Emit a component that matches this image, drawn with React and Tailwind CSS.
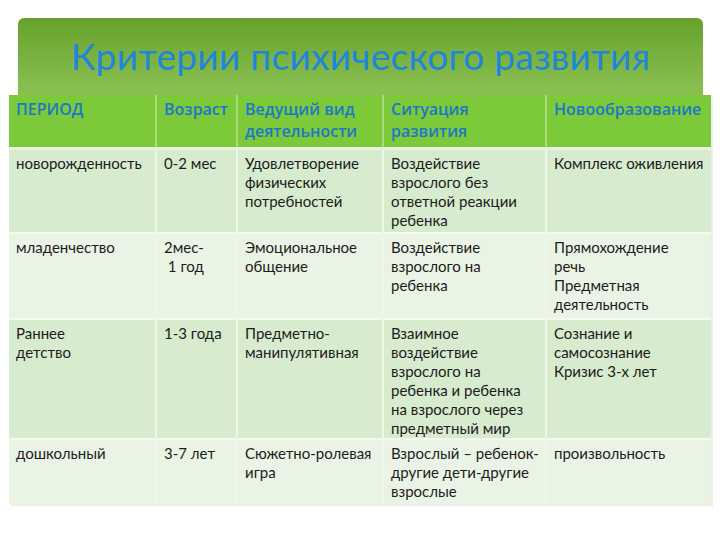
import React from "react";

const cols = [
  { label: ["ПЕРИОД"], w: "w-[147px]" },
  { label: ["Возраст"], w: "w-[81px]" },
  { label: ["Ведущий вид", "деятельности"], w: "w-[146px]" },
  { label: ["Ситуация", "развития"], w: "w-[163px]" },
  { label: ["Новообразование"], w: "w-[165px]" },
];

const rows = [
  {
    h: "h-[85px]",
    bg: "bg-[#d7ebce]",
    cells: [
      ["новорожденность"],
      ["0-2 мес"],
      ["Удовлетворение", "физических", "потребностей"],
      ["Воздействие", "взрослого без", "ответной реакции", "ребенка"],
      ["Комплекс оживления"],
    ],
  },
  {
    h: "h-[86px]",
    bg: "bg-[#eaf4e5]",
    cells: [
      ["младенчество"],
      ["2мес-", "\u00a01 год"],
      ["Эмоциональное", "общение"],
      ["Воздействие", "взрослого на", "ребенка"],
      ["Прямохождение", "речь", "Предметная", "деятельность"],
    ],
  },
  {
    h: "h-[120px]",
    bg: "bg-[#d7ebce]",
    cells: [
      ["Раннее", "детство"],
      ["1-3 года"],
      ["Предметно-", "манипулятивная"],
      ["Взаимное", "воздействие", "взрослого на", "ребенка и ребенка", "на взрослого через", "предметный мир"],
      ["Сознание и", "самосознание", "Кризис 3-х лет"],
    ],
  },
  {
    h: "h-[65px]",
    bg: "bg-[#eaf4e5]",
    cells: [
      ["дошкольный"],
      ["3-7 лет"],
      ["Сюжетно-ролевая", "игра"],
      ["Взрослый – ребенок-", "другие дети-другие", "взрослые"],
      ["произвольность"],
    ],
  },
];

export default function App() {
  return (
    <div
      className="w-[720px] h-[540px] bg-white relative overflow-hidden"
      style={{ fontFamily: "Lato, 'Open Sans', sans-serif" }}
    >
      <div className="pt-[18px] pl-[18px] pr-[17px]">
        <div className="h-[77px] rounded-t-md bg-gradient-to-b from-[#66a22b] to-[#8cc152] flex items-center justify-center">
          <h1 className="text-[37px] leading-none font-normal text-[#1f86da] tracking-[0.3px] -mt-[3px]">
            Критерии психического развития
          </h1>
        </div>
      </div>

      <div className="pl-[9px]">
        <table className="table-fixed border-collapse w-[702px] shadow-[2px_2px_0_#eceeea]">
          <thead>
            <tr className="h-[53px] bg-[#7cc93a] border-b-[3px] border-[#eaf2e4]">
              {cols.map((c, i) => (
                <th
                  key={i}
                  className={`${c.w} align-top text-left px-[7px] pt-[3px] text-[16px] leading-[22px] font-semibold text-[#1d77c7] font-['Open_Sans',sans-serif] ${
                    i > 0 ? "border-l-2 border-[#a7dc7f]" : ""
                  }`}
                >
                  {c.label.map((l, li) => (
                    <div key={li} className="whitespace-nowrap">
                      {l}
                    </div>
                  ))}
                </th>
              ))}
            </tr>
          </thead>
          <tbody>
            {rows.map((r, ri) => (
              <tr key={ri} className={`${r.h} ${r.bg} ${ri < rows.length - 1 ? "border-b-[2px] border-[#f4f9f1]" : ""}`}>
                {r.cells.map((lines, ci) => (
                  <td
                    key={ci}
                    className={`align-top px-[7px] pt-[4px] text-[15px] leading-[19px] text-[#1c1c1c] ${
                      ci > 0 ? "border-l-2 border-[#edf6e8]" : ""
                    }`}
                  >
                    {lines.map((l, li) => (
                      <div key={li} className="whitespace-nowrap">
                        {l}
                      </div>
                    ))}
                  </td>
                ))}
              </tr>
            ))}
          </tbody>
        </table>
      </div>
    </div>
  );
}
